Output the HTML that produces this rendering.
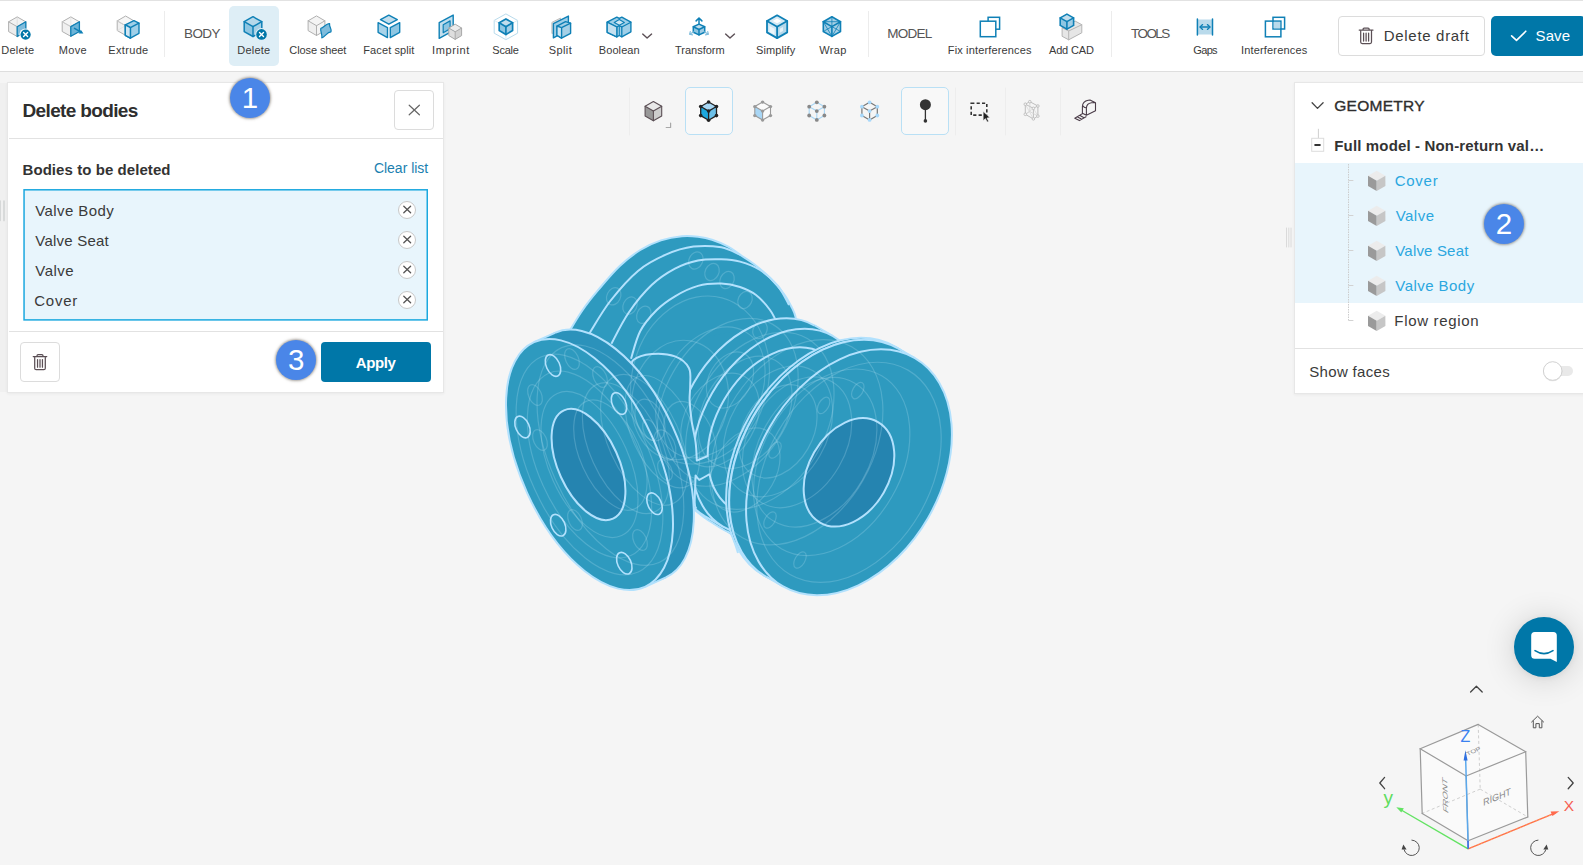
<!DOCTYPE html>
<html lang="en">
<head>
<meta charset="utf-8">
<title>CAD mode - Delete bodies</title>
<style>
*{box-sizing:border-box}
html,body{margin:0;padding:0}
body{width:1583px;height:865px;overflow:hidden;position:relative;background:#f5f5f5;font-family:"Liberation Sans",sans-serif}
.abs,.t,svg.i{position:absolute}
.t{white-space:nowrap;font-weight:400}
#topbar{left:0;top:0;width:1583px;height:72px;background:#fff;border-top:1px solid #e2e2e2;border-bottom:1px solid #dedede}
.sep{width:1px;top:11px;height:46px;background:#ececec}
#hl{left:229px;top:6px;width:50px;height:60px;background:#deeef6;border-radius:5px}
.btn{background:#fff;border:1px solid #dcdcdc;border-radius:4px}
.pbtn{background:#0077a8;border-radius:4px}
.panel{background:#fff;border:1px solid #e7e7e7;box-shadow:0 1px 3px rgba(0,0,0,.05)}
.hr{height:1px;background:#e2e2e2}
.badge{width:40px;height:40px;border-radius:50%;background:#4a86e8;box-shadow:0 0 2.5px 1px rgba(95,85,75,.55);color:#fff;font-size:29.5px;line-height:40px;text-align:center}
.xc{width:18px;height:18px;border-radius:50%;background:#fff;border:1px solid #c8c8c8}
.act{width:48px;height:48px;top:87px;border:1px solid #b9e0f5;border-radius:5px;background:#f8f8f8}
</style>
</head>
<body>
<div id="topbar" class="abs"></div>
<div class="abs" style="left:0;top:83px;width:7px;height:309px;background:#f0f0f0"></div>
<div id="hl" class="abs"></div>
<div class="abs sep" style="left:164px"></div>
<div class="abs sep" style="left:868px"></div>
<div class="abs sep" style="left:1111px"></div>
<div class="abs btn" style="left:1338px;top:16px;width:147px;height:40px"></div>
<div class="abs pbtn" style="left:1491px;top:16px;width:95px;height:40px;border-radius:5px"></div>

<!-- left panel -->
<div class="abs panel" style="left:7px;top:82px;width:437px;height:311px"></div>
<div class="abs hr" style="left:9px;top:138px;width:434px"></div>
<div class="abs btn" style="left:394px;top:90px;width:40px;height:40px"></div>
<div class="abs" style="left:24px;top:190px;width:403px;height:130px;background:#e8f5fc"></div>
<svg class="i" style="left:0;top:0" width="460" height="400"><rect x="24.05" y="189.8" width="403.2" height="130.1" fill="none" stroke="#1ba8df" stroke-width="1.5"/></svg>
<div class="abs xc" style="left:398px;top:200.5px"></div>
<div class="abs xc" style="left:398px;top:230.5px"></div>
<div class="abs xc" style="left:398px;top:260.5px"></div>
<div class="abs xc" style="left:398px;top:290.5px"></div>
<div class="abs hr" style="left:9px;top:331px;width:434px"></div>
<div class="abs btn" style="left:20px;top:342px;width:40px;height:40px"></div>
<div class="abs pbtn" style="left:321px;top:342px;width:110px;height:40px"></div>

<!-- right panel -->
<div class="abs panel" style="left:1294px;top:82px;width:300px;height:312px"></div>
<div class="abs" style="left:1295px;top:163px;width:288px;height:140px;background:#e8f5fc"></div>
<div class="abs hr" style="left:1295px;top:348px;width:288px"></div>

<!-- view toolbar active boxes -->
<div class="abs act" style="left:685px"></div>
<div class="abs act" style="left:901px"></div>

<svg class="i" style="left:0;top:0" width="1583" height="865" viewBox="0 0 1583 865">
<path d="M569.8 330.5C571.9 327.1 577.7 317.1 582.5 310.2C587.3 303.3 592.5 296.7 598.7 289.4C604.9 282.1 612.6 272.9 619.5 266.3C626.4 259.7 633.4 254.3 640.3 250.0C647.2 245.7 654.0 242.7 661.0 240.4C668.0 238.1 675.8 236.8 682.0 236.2C688.2 235.6 693.0 236.1 698.0 236.7C703.0 237.3 707.0 238.0 712.0 239.7C717.0 241.3 723.5 244.1 728.2 246.6C732.9 249.1 735.7 251.8 740.0 254.7C744.3 257.6 748.9 260.1 753.9 264.0C758.9 267.9 765.0 272.8 770.0 277.8C775.0 282.8 780.3 289.0 784.0 294.0C787.7 299.0 790.1 304.1 792.0 307.9C793.9 311.7 794.7 313.0 795.5 316.7C796.3 320.4 796.8 327.8 797.0 330.0L790 420L740 500L690 505L620 470L575 400Z" fill="#2e9abf" stroke="#b2e1fd" stroke-width="2" stroke-linejoin="round"/>
<path d="M589.4 333.3C592.9 327.9 602.2 311.4 610.3 301.0C618.4 290.6 628.8 278.6 638.0 270.9C647.2 263.2 656.5 258.8 665.8 254.7C675.0 250.6 684.2 247.8 693.5 246.6C702.8 245.4 713.5 246.0 721.3 247.3C729.0 248.7 736.9 253.5 740.0 254.7" fill="none" stroke="#b2e1fd" stroke-width="2" stroke-linejoin="round"/>
<path d="M611.4 343.7C614.3 338.5 622.0 322.3 628.8 312.5C635.5 302.7 644.2 292.1 651.9 284.8C659.6 277.5 667.3 272.7 675.0 268.6C682.7 264.6 690.3 262.1 698.0 260.5C705.7 258.9 714.3 259.1 721.3 259.3C728.3 259.5 733.5 259.8 740.0 261.6C746.5 263.4 753.7 265.9 760.0 270.0C766.3 274.1 773.2 280.2 778.0 286.0C782.8 291.8 787.2 301.8 789.0 305.0" fill="none" stroke="#b2e1fd" stroke-width="2" stroke-linejoin="round"/>
<path d="M631.0 358.8C632.5 354.2 636.0 339.1 640.3 331.0C644.5 322.9 650.7 316.0 656.5 310.2C662.3 304.4 668.1 300.4 675.0 296.3C681.9 292.2 690.3 288.0 698.0 285.9C705.7 283.8 714.3 283.4 721.3 283.6C728.3 283.8 734.2 285.1 740.0 287.0C745.8 288.9 751.0 291.2 756.0 295.0C761.0 298.8 766.3 305.0 770.0 310.0C773.7 315.0 776.7 322.5 778.0 325.0" fill="none" stroke="#b2e1fd" stroke-width="2" stroke-linejoin="round"/>
<path d="M640 350L740 330L745 520L731.6 535L706 518.7L694 509.3L690 500Z" fill="#2e9abf" stroke="none" stroke-width="2" stroke-linejoin="round"/>
<path d="M694.0 509.3C696.0 510.9 701.0 515.2 706.0 518.7C711.0 522.2 719.7 527.3 724.0 530.0C728.3 532.7 729.3 531.2 731.6 535.0C733.9 538.8 736.9 550.0 738.0 553.0" fill="none" stroke="#b2e1fd" stroke-width="2" stroke-linejoin="round"/>
<ellipse cx="759.8" cy="420.8" rx="76.2" ry="110.0" transform="rotate(30 759.8 420.8)" fill="#2e9abf" stroke="#b2e1fd" stroke-width="2"/>
<path d="M814.8 325.5L833.0 336.0L723.0 526.6L704.8 516.1Z" fill="#2e9abf" stroke="none" stroke-width="2" stroke-linejoin="round"/>
<path d="M814.8 325.5L833.0 336.0M723.0 526.6L704.8 516.1" fill="none" stroke="#b2e1fd" stroke-width="2" stroke-linejoin="round"/>
<ellipse cx="778.0" cy="431.3" rx="76.2" ry="110.0" transform="rotate(30 778.0 431.3)" fill="#2e9abf" stroke="#b2e1fd" stroke-width="2"/>
<ellipse cx="778.0" cy="431.3" rx="62.4" ry="90.0" transform="rotate(30 778.0 431.3)" fill="#2e9abf" stroke="#b2e1fd" stroke-width="2"/>
<path d="M823.0 353.4L872.4 381.9L782.4 537.7L733.0 509.2Z" fill="#2e9abf" stroke="none" stroke-width="2" stroke-linejoin="round"/>
<path d="M823.0 353.4L872.4 381.9M782.4 537.7L733.0 509.2" fill="none" stroke="#b2e1fd" stroke-width="2" stroke-linejoin="round"/>
<ellipse cx="827.4" cy="459.8" rx="62.4" ry="90.0" transform="rotate(30 827.4 459.8)" fill="#2e9abf" stroke="#b2e1fd" stroke-width="2"/>
<ellipse cx="829.1" cy="460.8" rx="91.3" ry="131.8" transform="rotate(30 829.1 460.8)" fill="#2e9abf" stroke="#b2e1fd" stroke-width="2"/>
<path d="M895.0 346.7L898.0 348.4L766.2 576.7L763.2 574.9Z" fill="#2e9abf" stroke="none" stroke-width="2" stroke-linejoin="round"/>
<path d="M895.0 346.7L898.0 348.4M766.2 576.7L763.2 574.9" fill="none" stroke="#b2e1fd" stroke-width="2" stroke-linejoin="round"/>
<ellipse cx="832.1" cy="462.6" rx="91.3" ry="131.8" transform="rotate(30 832.1 462.6)" fill="#2e9abf" stroke="#b2e1fd" stroke-width="2"/>
<ellipse cx="832.1" cy="462.6" rx="91.3" ry="131.8" transform="rotate(30 832.1 462.6)" fill="#2e9abf" stroke="#b2e1fd" stroke-width="2"/>
<path d="M898.0 348.4L914.9 358.2L783.1 586.4L766.2 576.7Z" fill="#2e9abf" stroke="none" stroke-width="2" stroke-linejoin="round"/>
<path d="M898.0 348.4L914.9 358.2M783.1 586.4L766.2 576.7" fill="none" stroke="#b2e1fd" stroke-width="2" stroke-linejoin="round"/>
<ellipse cx="849.0" cy="472.3" rx="91.3" ry="131.8" transform="rotate(30 849.0 472.3)" fill="#2e9abf" stroke="#b2e1fd" stroke-width="2"/>
<ellipse cx="849.0" cy="472.3" rx="40.2" ry="58.0" transform="rotate(30 849.0 472.3)" fill="#2584b0" stroke="#b2e1fd" stroke-width="2"/>
<path d="M690.2 385.3L689.6 400.3L691.7 421.4L695.6 442.4L696.8 460.5L708.3 455.9L709.8 474L699.2 480L695.6 475.5L694.7 502.6L694 509.3L670 530L640 450L631 372L633.4 360L651.9 354L675 356.4L688.9 368Z" fill="#2e9abf" stroke="none" stroke-width="2" stroke-linejoin="round"/>
<path d="M631.0 372.0C631.4 370.0 629.9 363.0 633.4 360.0C636.9 357.0 645.0 354.6 651.9 354.0C658.8 353.4 668.8 354.1 675.0 356.4C681.2 358.7 686.4 363.2 688.9 368.0C691.4 372.8 690.1 379.9 690.2 385.3C690.3 390.7 689.4 394.3 689.6 400.3C689.9 406.3 690.7 414.4 691.7 421.4C692.7 428.4 694.8 435.9 695.6 442.4C696.5 448.9 696.6 457.5 696.8 460.5L708.3 455.9" fill="none" stroke="#b2e1fd" stroke-width="2" stroke-linejoin="round"/>
<path d="M709.8 474L699.2 480L695.6 475.5C695.5 480.0 694.6 497.1 694.7 502.6C694.8 508.1 696.0 507.6 696.2 508.6" fill="none" stroke="#b2e1fd" stroke-width="2" stroke-linejoin="round"/>
<ellipse cx="610.4" cy="455.1" rx="68.5" ry="134.3" transform="rotate(-24.4 610.4 455.1)" fill="#2b92bb" stroke="#b2e1fd" stroke-width="2"/>
<path d="M555.0 332.8L534.0 342.2L645.0 586.8L665.9 577.4Z" fill="#2b92bb" stroke="none" stroke-width="2" stroke-linejoin="round"/>
<path d="M555.0 332.8L534.0 342.2M645.0 586.8L665.9 577.4" fill="none" stroke="#b2e1fd" stroke-width="2" stroke-linejoin="round"/>
<ellipse cx="589.5" cy="464.5" rx="68.5" ry="134.3" transform="rotate(-24.4 589.5 464.5)" fill="#2e9abf" stroke="#b2e1fd" stroke-width="2"/>
<ellipse cx="588.5" cy="464.5" rx="30.3" ry="59.4" transform="rotate(-24.4 588.5 464.5)" fill="#2584b0" stroke="#b2e1fd" stroke-width="2"/>
<ellipse cx="553.0" cy="365.5" rx="6.7" ry="11.5" transform="rotate(-24.4 553.0 365.5)" fill="none" stroke="#b2e1fd" stroke-width="1.6"/>
<ellipse cx="619.0" cy="403.5" rx="6.7" ry="11.5" transform="rotate(-24.4 619.0 403.5)" fill="none" stroke="#b2e1fd" stroke-width="1.6"/>
<ellipse cx="522.5" cy="427.0" rx="6.7" ry="11.5" transform="rotate(-24.4 522.5 427.0)" fill="none" stroke="#b2e1fd" stroke-width="1.6"/>
<ellipse cx="654.5" cy="503.7" rx="6.7" ry="11.5" transform="rotate(-24.4 654.5 503.7)" fill="none" stroke="#b2e1fd" stroke-width="1.6"/>
<ellipse cx="558.2" cy="525.2" rx="6.7" ry="11.5" transform="rotate(-24.4 558.2 525.2)" fill="none" stroke="#b2e1fd" stroke-width="1.6"/>
<ellipse cx="624.3" cy="563.2" rx="6.7" ry="11.5" transform="rotate(-24.4 624.3 563.2)" fill="none" stroke="#b2e1fd" stroke-width="1.6"/>
<ellipse cx="695.8" cy="260.5" rx="6.8" ry="9.0" transform="rotate(25 695.8 260.5)" fill="none" stroke="rgba(200,235,252,0.22)" stroke-width="1.2"/>
<ellipse cx="712.0" cy="272.0" rx="6.8" ry="9.0" transform="rotate(25 712.0 272.0)" fill="none" stroke="rgba(200,235,252,0.22)" stroke-width="1.2"/>
<ellipse cx="727.0" cy="280.0" rx="6.8" ry="9.0" transform="rotate(25 727.0 280.0)" fill="none" stroke="rgba(200,235,252,0.22)" stroke-width="1.2"/>
<ellipse cx="613.7" cy="296.3" rx="6.8" ry="9.0" transform="rotate(25 613.7 296.3)" fill="none" stroke="rgba(200,235,252,0.22)" stroke-width="1.2"/>
<ellipse cx="630.0" cy="305.6" rx="6.8" ry="9.0" transform="rotate(25 630.0 305.6)" fill="none" stroke="rgba(200,235,252,0.22)" stroke-width="1.2"/>
<ellipse cx="643.8" cy="314.8" rx="6.8" ry="9.0" transform="rotate(25 643.8 314.8)" fill="none" stroke="rgba(200,235,252,0.22)" stroke-width="1.2"/>
<ellipse cx="745.0" cy="300.0" rx="6.8" ry="9.0" transform="rotate(25 745.0 300.0)" fill="none" stroke="rgba(200,235,252,0.22)" stroke-width="1.2"/>
<ellipse cx="760.0" cy="330.0" rx="6.8" ry="9.0" transform="rotate(25 760.0 330.0)" fill="none" stroke="rgba(200,235,252,0.22)" stroke-width="1.2"/>
<ellipse cx="849.0" cy="472.3" rx="81.8" ry="118.0" transform="rotate(30 849.0 472.3)" fill="none" stroke="rgba(200,235,252,0.22)" stroke-width="1.2"/>
<ellipse cx="831.7" cy="462.3" rx="69.3" ry="100.0" transform="rotate(30 831.7 462.3)" fill="none" stroke="rgba(200,235,252,0.22)" stroke-width="1.2"/>
<ellipse cx="814.4" cy="452.3" rx="55.4" ry="80.0" transform="rotate(30 814.4 452.3)" fill="none" stroke="rgba(200,235,252,0.22)" stroke-width="1.2"/>
<ellipse cx="797.0" cy="442.3" rx="48.5" ry="70.0" transform="rotate(30 797.0 442.3)" fill="none" stroke="rgba(200,235,252,0.22)" stroke-width="1.2"/>
<ellipse cx="778.0" cy="431.3" rx="48.5" ry="70.0" transform="rotate(30 778.0 431.3)" fill="none" stroke="rgba(200,235,252,0.22)" stroke-width="1.2"/>
<ellipse cx="778.0" cy="431.3" rx="34.6" ry="50.0" transform="rotate(30 778.0 431.3)" fill="none" stroke="rgba(200,235,252,0.22)" stroke-width="1.2"/>
<ellipse cx="759.8" cy="420.8" rx="65.8" ry="95.0" transform="rotate(30 759.8 420.8)" fill="none" stroke="rgba(200,235,252,0.22)" stroke-width="1.2"/>
<ellipse cx="797.0" cy="442.3" rx="76.2" ry="110.0" transform="rotate(30 797.0 442.3)" fill="none" stroke="rgba(200,235,252,0.22)" stroke-width="1.2"/>
<ellipse cx="745.1" cy="412.3" rx="41.6" ry="60.0" transform="rotate(30 745.1 412.3)" fill="none" stroke="rgba(200,235,252,0.22)" stroke-width="1.2"/>
<ellipse cx="727.8" cy="402.3" rx="62.4" ry="90.0" transform="rotate(30 727.8 402.3)" fill="none" stroke="rgba(200,235,252,0.22)" stroke-width="1.2"/>
<ellipse cx="710.4" cy="392.3" rx="48.5" ry="70.0" transform="rotate(30 710.4 392.3)" fill="none" stroke="rgba(200,235,252,0.22)" stroke-width="1.2"/>
<ellipse cx="857.8" cy="390.6" rx="5.0" ry="9.0" transform="rotate(30 857.8 390.6)" fill="none" stroke="rgba(200,235,252,0.22)" stroke-width="1.2"/>
<ellipse cx="823.6" cy="405.4" rx="5.0" ry="9.0" transform="rotate(30 823.6 405.4)" fill="none" stroke="rgba(200,235,252,0.22)" stroke-width="1.2"/>
<ellipse cx="775.0" cy="450.0" rx="5.0" ry="9.0" transform="rotate(30 775.0 450.0)" fill="none" stroke="rgba(200,235,252,0.22)" stroke-width="1.2"/>
<ellipse cx="770.0" cy="520.0" rx="5.0" ry="9.0" transform="rotate(30 770.0 520.0)" fill="none" stroke="rgba(200,235,252,0.22)" stroke-width="1.2"/>
<ellipse cx="800.0" cy="560.0" rx="5.0" ry="9.0" transform="rotate(30 800.0 560.0)" fill="none" stroke="rgba(200,235,252,0.22)" stroke-width="1.2"/>
<ellipse cx="589.5" cy="464.5" rx="60.2" ry="118.0" transform="rotate(-24.4 589.5 464.5)" fill="none" stroke="rgba(200,235,252,0.22)" stroke-width="1.2"/>
<ellipse cx="589.5" cy="464.5" rx="51.0" ry="100.0" transform="rotate(-24.4 589.5 464.5)" fill="none" stroke="rgba(200,235,252,0.22)" stroke-width="1.2"/>
<ellipse cx="589.5" cy="464.5" rx="39.8" ry="78.0" transform="rotate(-24.4 589.5 464.5)" fill="none" stroke="rgba(200,235,252,0.22)" stroke-width="1.2"/>
<ellipse cx="610.4" cy="455.1" rx="60.2" ry="118.0" transform="rotate(-24.4 610.4 455.1)" fill="none" stroke="rgba(200,235,252,0.22)" stroke-width="1.2"/>
<ellipse cx="625.9" cy="448.1" rx="35.7" ry="70.0" transform="rotate(-24.4 625.9 448.1)" fill="none" stroke="rgba(200,235,252,0.22)" stroke-width="1.2"/>
<ellipse cx="644.1" cy="439.9" rx="35.7" ry="70.0" transform="rotate(-24.4 644.1 439.9)" fill="none" stroke="rgba(200,235,252,0.22)" stroke-width="1.2"/>
<ellipse cx="662.3" cy="431.7" rx="30.6" ry="60.0" transform="rotate(-24.4 662.3 431.7)" fill="none" stroke="rgba(200,235,252,0.22)" stroke-width="1.2"/>
<ellipse cx="610.4" cy="455.1" rx="30.1" ry="59.0" transform="rotate(-24.4 610.4 455.1)" fill="none" stroke="rgba(200,235,252,0.22)" stroke-width="1.2"/>
<ellipse cx="572.0" cy="359.0" rx="6.4" ry="11.0" transform="rotate(-24.4 572.0 359.0)" fill="none" stroke="rgba(200,235,252,0.22)" stroke-width="1.2"/>
<ellipse cx="600.0" cy="377.0" rx="6.4" ry="11.0" transform="rotate(-24.4 600.0 377.0)" fill="none" stroke="rgba(200,235,252,0.22)" stroke-width="1.2"/>
<ellipse cx="535.0" cy="395.0" rx="6.4" ry="11.0" transform="rotate(-24.4 535.0 395.0)" fill="none" stroke="rgba(200,235,252,0.22)" stroke-width="1.2"/>
<ellipse cx="540.0" cy="440.0" rx="6.4" ry="11.0" transform="rotate(-24.4 540.0 440.0)" fill="none" stroke="rgba(200,235,252,0.22)" stroke-width="1.2"/>
<ellipse cx="575.0" cy="520.0" rx="6.4" ry="11.0" transform="rotate(-24.4 575.0 520.0)" fill="none" stroke="rgba(200,235,252,0.22)" stroke-width="1.2"/>
<ellipse cx="640.0" cy="540.0" rx="6.4" ry="11.0" transform="rotate(-24.4 640.0 540.0)" fill="none" stroke="rgba(200,235,252,0.22)" stroke-width="1.2"/>
<ellipse cx="665.0" cy="470.0" rx="6.4" ry="11.0" transform="rotate(-24.4 665.0 470.0)" fill="none" stroke="rgba(200,235,252,0.22)" stroke-width="1.2"/>
<ellipse cx="650.0" cy="430.0" rx="6.4" ry="11.0" transform="rotate(-24.4 650.0 430.0)" fill="none" stroke="rgba(200,235,252,0.22)" stroke-width="1.2"/>
<ellipse cx="680.0" cy="400.0" rx="48.0" ry="60.0" transform="rotate(10 680.0 400.0)" fill="none" stroke="rgba(200,235,252,0.22)" stroke-width="1.2"/>
<ellipse cx="700.0" cy="380.0" rx="68.0" ry="85.0" transform="rotate(15 700.0 380.0)" fill="none" stroke="rgba(200,235,252,0.22)" stroke-width="1.2"/>
<ellipse cx="720.0" cy="420.0" rx="35.0" ry="50.0" transform="rotate(30 720.0 420.0)" fill="none" stroke="rgba(200,235,252,0.22)" stroke-width="1.2"/>
<ellipse cx="690.0" cy="440.0" rx="24.0" ry="40.0" transform="rotate(-20 690.0 440.0)" fill="none" stroke="rgba(200,235,252,0.22)" stroke-width="1.2"/>
<ellipse cx="730.0" cy="380.0" rx="21.0" ry="30.0" transform="rotate(30 730.0 380.0)" fill="none" stroke="rgba(200,235,252,0.22)" stroke-width="1.2"/>
<ellipse cx="650.0" cy="420.0" rx="13.2" ry="22.0" transform="rotate(-24 650.0 420.0)" fill="none" stroke="rgba(200,235,252,0.22)" stroke-width="1.2"/>
<ellipse cx="665.0" cy="445.0" rx="9.6" ry="16.0" transform="rotate(-24 665.0 445.0)" fill="none" stroke="rgba(200,235,252,0.22)" stroke-width="1.2"/>
<ellipse cx="745.0" cy="470.0" rx="31.0" ry="45.0" transform="rotate(30 745.0 470.0)" fill="none" stroke="rgba(200,235,252,0.22)" stroke-width="1.2"/>
</svg>
<div class="abs" style="left:1514px;top:616.9px;width:60px;height:60px;border-radius:50%;background:#0077a8;box-shadow:0 1px 6px rgba(0,0,0,.06),0 2px 32px rgba(0,0,0,.16)"></div>
<svg class="i" style="left:0;top:0" width="1583" height="865" viewBox="0 0 1583 865">
<polygon points="17.2,16.9 25.8,21.8 17.2,26.7 8.6,21.8" fill="#f2f2f2" stroke="none" stroke-width="1" stroke-linejoin="round"/>
<polygon points="8.6,21.8 17.2,26.7 17.2,36.5 8.6,31.6" fill="#ececec" stroke="none" stroke-width="1" stroke-linejoin="round"/>
<polygon points="17.2,26.7 25.8,21.8 25.8,31.6 17.2,36.5" fill="#7fbcdc" stroke="none" stroke-width="1" stroke-linejoin="round"/>
<polygon points="17.2,16.9 25.8,21.8 25.8,31.6 17.2,36.5 8.6,31.6 8.6,21.8" fill="none" stroke="#b0b0b0" stroke-width="1" stroke-linejoin="round"/>
<polyline points="8.6,21.8 17.2,26.7 25.8,21.8" fill="none" stroke="#b0b0b0" stroke-width="1" stroke-linecap="round" stroke-linejoin="round"/>
<polyline points="17.2,26.7 17.2,36.5" fill="none" stroke="#b0b0b0" stroke-width="1" stroke-linecap="round" stroke-linejoin="round"/>
<polyline points="17.2,16.9 17.2,26.7" fill="none" stroke="#d5d5d5" stroke-width="0.6" stroke-linecap="round" stroke-linejoin="round"/>
<polygon points="17.2,26.7 25.8,21.8 25.8,31.6 17.2,36.5" fill="#7fbcdc" stroke="#0f80b6" stroke-width="1.3" stroke-linejoin="round"/>
<circle cx="25.6" cy="34.6" r="6.2" fill="#fff" stroke="none" stroke-width="1"/>
<circle cx="25.6" cy="34.6" r="5.1" fill="#0077a8" stroke="none" stroke-width="1"/>
<polyline points="23.6,32.6 27.6,36.6" fill="none" stroke="#fff" stroke-width="1.4" stroke-linecap="round" stroke-linejoin="round"/>
<polyline points="27.6,32.6 23.6,36.6" fill="none" stroke="#fff" stroke-width="1.4" stroke-linecap="round" stroke-linejoin="round"/>
<polygon points="70.8,16.9 79.4,21.8 70.8,26.6 62.2,21.8" fill="#f6f6f6" stroke="none" stroke-width="1" stroke-linejoin="round"/>
<polygon points="62.2,21.8 70.8,26.6 70.8,36.3 62.2,31.5" fill="#f0f0f0" stroke="none" stroke-width="1" stroke-linejoin="round"/>
<polygon points="70.8,26.6 79.4,21.8 79.4,31.5 70.8,36.3" fill="#6db4d8" stroke="none" stroke-width="1" stroke-linejoin="round"/>
<polygon points="70.8,16.9 79.4,21.8 79.4,31.5 70.8,36.3 62.2,31.5 62.2,21.8" fill="none" stroke="#b0b0b0" stroke-width="1" stroke-linejoin="round"/>
<polyline points="62.2,21.8 70.8,26.6 79.4,21.8" fill="none" stroke="#b0b0b0" stroke-width="1" stroke-linecap="round" stroke-linejoin="round"/>
<polyline points="70.8,26.6 70.8,36.3" fill="none" stroke="#b0b0b0" stroke-width="1" stroke-linecap="round" stroke-linejoin="round"/>
<polyline points="62.2,21.8 79.4,31.5" fill="none" stroke="#dcdcdc" stroke-width="0.6" stroke-linecap="round" stroke-linejoin="round"/>
<polyline points="70.8,16.9 70.8,26.6" fill="none" stroke="#dcdcdc" stroke-width="0.6" stroke-linecap="round" stroke-linejoin="round"/>
<polygon points="70.8,26.6 79.4,21.8 79.4,31.5 70.8,36.3" fill="#6db4d8" stroke="#0f80b6" stroke-width="1.3" stroke-linejoin="round"/>
<polyline points="74.5,28.3 81.0,32.2" fill="none" stroke="#0f80b6" stroke-width="1.5" stroke-linecap="round" stroke-linejoin="round"/>
<polygon points="83.4,33.6 78.6,33.4 80.8,29.8" fill="#0f80b6" stroke="none" stroke-width="1" stroke-linejoin="round"/>
<polygon points="125.6,16.0 134.0,20.9 125.6,25.7 117.2,20.9" fill="#f6f6f6" stroke="none" stroke-width="1" stroke-linejoin="round"/>
<polygon points="117.2,20.9 125.6,25.7 125.6,35.4 117.2,30.5" fill="#f0f0f0" stroke="none" stroke-width="1" stroke-linejoin="round"/>
<polygon points="125.6,25.7 134.0,20.9 134.0,30.5 125.6,35.4" fill="#f0f0f0" stroke="none" stroke-width="1" stroke-linejoin="round"/>
<polygon points="125.6,16.0 134.0,20.9 134.0,30.5 125.6,35.4 117.2,30.5 117.2,20.9" fill="none" stroke="#b0b0b0" stroke-width="1" stroke-linejoin="round"/>
<polyline points="117.2,20.9 125.6,25.7 134.0,20.9" fill="none" stroke="#b0b0b0" stroke-width="1" stroke-linecap="round" stroke-linejoin="round"/>
<polyline points="125.6,25.7 125.6,35.4" fill="none" stroke="#b0b0b0" stroke-width="1" stroke-linecap="round" stroke-linejoin="round"/>
<polyline points="117.2,20.9 134.0,30.5" fill="none" stroke="#dcdcdc" stroke-width="0.6" stroke-linecap="round" stroke-linejoin="round"/>
<polyline points="117.2,30.5 134.0,20.9" fill="none" stroke="#dcdcdc" stroke-width="0.6" stroke-linecap="round" stroke-linejoin="round"/>
<polygon points="125.3,24.8 133.9,20.6 139.0,23.2 139.0,33.3 130.4,38.1 125.3,35.3" fill="#9fcfe8" stroke="#0f80b6" stroke-width="1.4" stroke-linejoin="round"/>
<polyline points="125.3,24.8 130.4,27.7 139.0,23.2" fill="none" stroke="#0f80b6" stroke-width="1.4" stroke-linecap="round" stroke-linejoin="round"/>
<polyline points="130.4,27.7 130.4,38.1" fill="none" stroke="#0f80b6" stroke-width="1.4" stroke-linecap="round" stroke-linejoin="round"/>
<polygon points="125.3,24.8 130.4,27.7 130.4,38.1 125.3,35.3" fill="#cfe6f3" stroke="#0f80b6" stroke-width="1.4" stroke-linejoin="round"/>
<polygon points="253.0,16.7 261.8,21.7 253.0,26.6 244.2,21.7" fill="#b5d8ea" stroke="none" stroke-width="1" stroke-linejoin="round"/>
<polygon points="244.2,21.7 253.0,26.6 253.0,36.5 244.2,31.6" fill="#8ec6e2" stroke="none" stroke-width="1" stroke-linejoin="round"/>
<polygon points="253.0,26.6 261.8,21.7 261.8,31.6 253.0,36.5" fill="#a6d0e6" stroke="none" stroke-width="1" stroke-linejoin="round"/>
<polygon points="253.0,16.7 261.8,21.7 261.8,31.6 253.0,36.5 244.2,31.6 244.2,21.7" fill="none" stroke="#0f80b6" stroke-width="1.5" stroke-linejoin="round"/>
<polyline points="244.2,21.7 253.0,26.6 261.8,21.7" fill="none" stroke="#0f80b6" stroke-width="1.5" stroke-linecap="round" stroke-linejoin="round"/>
<polyline points="253.0,26.6 253.0,36.5" fill="none" stroke="#0f80b6" stroke-width="1.5" stroke-linecap="round" stroke-linejoin="round"/>
<circle cx="261.5" cy="34.4" r="6.3" fill="#deeef6" stroke="none" stroke-width="1"/>
<circle cx="261.5" cy="34.4" r="5.3" fill="#0077a8" stroke="none" stroke-width="1"/>
<polyline points="259.5,32.4 263.5,36.4" fill="none" stroke="#fff" stroke-width="1.4" stroke-linecap="round" stroke-linejoin="round"/>
<polyline points="263.5,32.4 259.5,36.4" fill="none" stroke="#fff" stroke-width="1.4" stroke-linecap="round" stroke-linejoin="round"/>
<polygon points="316.5,15.9 324.9,20.8 316.5,25.7 308.1,20.8" fill="#f4f4f4" stroke="none" stroke-width="1" stroke-linejoin="round"/>
<polygon points="308.1,20.8 316.5,25.7 316.5,35.5 308.1,30.6" fill="#efefef" stroke="none" stroke-width="1" stroke-linejoin="round"/>
<polygon points="316.5,25.7 324.9,20.8 324.9,30.6 316.5,35.5" fill="#f4f4f4" stroke="none" stroke-width="1" stroke-linejoin="round"/>
<polygon points="316.5,15.9 324.9,20.8 324.9,30.6 316.5,35.5 308.1,30.6 308.1,20.8" fill="none" stroke="#b0b0b0" stroke-width="1" stroke-linejoin="round"/>
<polyline points="308.1,20.8 316.5,25.7 324.9,20.8" fill="none" stroke="#b0b0b0" stroke-width="1" stroke-linecap="round" stroke-linejoin="round"/>
<polyline points="316.5,25.7 316.5,35.5" fill="none" stroke="#b0b0b0" stroke-width="1" stroke-linecap="round" stroke-linejoin="round"/>
<path d="M320.8 28.4C324 28 326 23 329.6 23.6C329 27 332 29 331 31.9C327 32 325 37 321.8 37.8C322.5 34 320 31 320.8 28.4Z" fill="#7fbcdc" stroke="#0f80b6" stroke-width="1.2" stroke-linejoin="round"/>
<polygon points="388.8,15.1 397.3,19.6 388.8,24.2 380.5,19.6" fill="#c2deed" stroke="#0f80b6" stroke-width="1.4" stroke-linejoin="round"/>
<polygon points="378.1,22.7 387.5,27.7 387.5,37.6 378.1,32.3" fill="#a8d3e9" stroke="#0f80b6" stroke-width="1.4" stroke-linejoin="round"/>
<polygon points="390.3,27.7 399.7,22.7 399.7,32.3 390.3,37.6" fill="#8ec6e2" stroke="#0f80b6" stroke-width="1.4" stroke-linejoin="round"/>
<polygon points="439.2,22.7 453.2,15.1 453.2,30.7 439.2,38.3" fill="#c2deed" stroke="#0f80b6" stroke-width="1.4" stroke-linejoin="round"/>
<polygon points="443.2,24.7 450.1,20.9 450.1,28.7 443.2,32.8" fill="#8ec6e2" stroke="#0f80b6" stroke-width="1.2" stroke-linejoin="round"/>
<polygon points="455.2,24.2 461.6,28.0 455.2,31.8 448.8,28.0" fill="#ececec" stroke="none" stroke-width="1" stroke-linejoin="round"/>
<polygon points="448.8,28.0 455.2,31.8 455.2,39.4 448.8,35.6" fill="#dedede" stroke="none" stroke-width="1" stroke-linejoin="round"/>
<polygon points="455.2,31.8 461.6,28.0 461.6,35.6 455.2,39.4" fill="#d2d2d2" stroke="none" stroke-width="1" stroke-linejoin="round"/>
<polygon points="455.2,24.2 461.6,28.0 461.6,35.6 455.2,39.4 448.8,35.6 448.8,28.0" fill="none" stroke="#a8a8a8" stroke-width="1" stroke-linejoin="round"/>
<polyline points="448.8,28.0 455.2,31.8 461.6,28.0" fill="none" stroke="#a8a8a8" stroke-width="1" stroke-linecap="round" stroke-linejoin="round"/>
<polyline points="455.2,31.8 455.2,39.4" fill="none" stroke="#a8a8a8" stroke-width="1" stroke-linecap="round" stroke-linejoin="round"/>
<polygon points="505.9,13.9 517.6,20.4 517.6,33.2 505.9,39.7 494.2,33.2 494.2,20.4" fill="#fff" stroke="#b9dbec" stroke-width="1" stroke-linejoin="round"/>
<polyline points="494.2,20.4 505.9,26.8 517.6,20.4" fill="none" stroke="#d3e8f3" stroke-width="0.8" stroke-linecap="round" stroke-linejoin="round"/>
<polyline points="505.9,26.8 505.9,39.7" fill="none" stroke="#d3e8f3" stroke-width="0.8" stroke-linecap="round" stroke-linejoin="round"/>
<polygon points="505.9,18.9 512.6,22.8 505.9,26.7 499.2,22.8" fill="#c2deed" stroke="none" stroke-width="1" stroke-linejoin="round"/>
<polygon points="499.2,22.8 505.9,26.7 505.9,34.5 499.2,30.6" fill="#8ec6e2" stroke="none" stroke-width="1" stroke-linejoin="round"/>
<polygon points="505.9,26.7 512.6,22.8 512.6,30.6 505.9,34.5" fill="#9fcde6" stroke="none" stroke-width="1" stroke-linejoin="round"/>
<polygon points="505.9,18.9 512.6,22.8 512.6,30.6 505.9,34.5 499.2,30.6 499.2,22.8" fill="none" stroke="#0f80b6" stroke-width="1.7" stroke-linejoin="round"/>
<polyline points="499.2,22.8 505.9,26.7 512.6,22.8" fill="none" stroke="#0f80b6" stroke-width="1.7" stroke-linecap="round" stroke-linejoin="round"/>
<polyline points="505.9,26.7 505.9,34.5" fill="none" stroke="#0f80b6" stroke-width="1.7" stroke-linecap="round" stroke-linejoin="round"/>
<polygon points="551.9,22.4 560.5,18.1 560.5,29.0 551.9,33.5" fill="#e4e4e4" stroke="#bdbdbd" stroke-width="1" stroke-linejoin="round"/>
<polygon points="553.4,23.7 568.4,16.1 568.4,29.7 553.4,37.8" fill="#9fcfe8" stroke="#0f80b6" stroke-width="1.4" stroke-linejoin="round"/>
<polygon points="557.0,26.2 565.5,21.6 570.6,23.2 570.6,33.3 561.5,38.1 557.0,35.3" fill="#a6d0e6" stroke="#0f80b6" stroke-width="1.4" stroke-linejoin="round"/>
<polyline points="557.0,26.2 561.5,27.7 570.6,23.2" fill="none" stroke="#0f80b6" stroke-width="1.4" stroke-linecap="round" stroke-linejoin="round"/>
<polyline points="561.5,27.7 561.5,38.1" fill="none" stroke="#0f80b6" stroke-width="1.4" stroke-linecap="round" stroke-linejoin="round"/>
<polygon points="557.0,26.2 561.5,27.7 561.5,38.1 557.0,35.3" fill="#cfe6f3" stroke="#0f80b6" stroke-width="1.2" stroke-linejoin="round"/>
<polygon points="607.2,22.2 616.8,17.1 619.3,18.4 621.8,17.1 630.9,22.2 630.9,31.8 621.8,36.8 619.3,35.5 616.8,36.8 607.2,32.3" fill="#9fcfe8" stroke="#0f80b6" stroke-width="1.4" stroke-linejoin="round"/>
<polyline points="607.2,22.2 616.8,27.0 619.3,25.7 621.8,27.0 630.9,22.2" fill="none" stroke="#0f80b6" stroke-width="1.3" stroke-linecap="round" stroke-linejoin="round"/>
<polyline points="616.8,27.0 616.8,36.8" fill="none" stroke="#0f80b6" stroke-width="1.3" stroke-linecap="round" stroke-linejoin="round"/>
<polyline points="621.8,27.0 621.8,36.8" fill="none" stroke="#0f80b6" stroke-width="1.3" stroke-linecap="round" stroke-linejoin="round"/>
<polyline points="619.3,25.7 619.3,35.5" fill="none" stroke="#0f80b6" stroke-width="1" stroke-linecap="round" stroke-linejoin="round"/>
<polygon points="619.3,19.6 624.4,22.4 619.3,25.2 614.2,22.4" fill="#cfe6f3" stroke="#0f80b6" stroke-width="1.1" stroke-linejoin="round"/>
<polygon points="607.2,22.2 616.8,27.0 616.8,36.8 607.2,32.3" fill="#c4e0ef" stroke="#0f80b6" stroke-width="1.3" stroke-linejoin="round"/>
<polyline points="642.7,34.1 647.1,38.1 651.6,34.1" fill="none" stroke="#5b4f55" stroke-width="1.4" stroke-linecap="round" stroke-linejoin="round"/>
<polygon points="699.0,24.1 704.7,26.8 699.0,29.5 693.3,26.8" fill="#c2deed" stroke="none" stroke-width="1" stroke-linejoin="round"/>
<polygon points="693.3,26.8 699.0,29.5 699.0,34.9 693.3,32.2" fill="#8ec6e2" stroke="none" stroke-width="1" stroke-linejoin="round"/>
<polygon points="699.0,29.5 704.7,26.8 704.7,32.2 699.0,34.9" fill="#9fcde6" stroke="none" stroke-width="1" stroke-linejoin="round"/>
<polygon points="699.0,24.1 704.7,26.8 704.7,32.2 699.0,34.9 693.3,32.2 693.3,26.8" fill="none" stroke="#0f80b6" stroke-width="1.5" stroke-linejoin="round"/>
<polyline points="693.3,26.8 699.0,29.5 704.7,26.8" fill="none" stroke="#0f80b6" stroke-width="1.5" stroke-linecap="round" stroke-linejoin="round"/>
<polyline points="699.0,29.5 699.0,34.9" fill="none" stroke="#0f80b6" stroke-width="1.5" stroke-linecap="round" stroke-linejoin="round"/>
<polyline points="699.0,23.5 699.0,18.4" fill="none" stroke="#0f80b6" stroke-width="1.5" stroke-linecap="round" stroke-linejoin="round"/>
<polyline points="696.1,20.9 699.0,18.0 701.9,20.9" fill="none" stroke="#0f80b6" stroke-width="1.5" stroke-linecap="round" stroke-linejoin="round"/>
<polyline points="693.5,32.0 690.0,34.0" fill="none" stroke="#7fbcdc" stroke-width="1.2" stroke-linecap="round" stroke-linejoin="round"/>
<polyline points="690.3,31.5 689.6,34.3 692.5,34.9" fill="none" stroke="#7fbcdc" stroke-width="1.1" stroke-linecap="round" stroke-linejoin="round"/>
<polyline points="704.5,32.0 708.0,34.0" fill="none" stroke="#7fbcdc" stroke-width="1.2" stroke-linecap="round" stroke-linejoin="round"/>
<polyline points="707.7,31.5 708.4,34.3 705.5,34.9" fill="none" stroke="#7fbcdc" stroke-width="1.1" stroke-linecap="round" stroke-linejoin="round"/>
<polyline points="725.6,34.1 730.0,38.1 734.5,34.1" fill="none" stroke="#5b4f55" stroke-width="1.4" stroke-linecap="round" stroke-linejoin="round"/>
<polygon points="777.1,15.3 787.2,21.0 777.1,26.7 767.0,21.0" fill="#d4e9f4" stroke="none" stroke-width="1" stroke-linejoin="round"/>
<polygon points="767.0,21.0 777.1,26.7 777.1,38.1 767.0,32.4" fill="#cfe6f3" stroke="none" stroke-width="1" stroke-linejoin="round"/>
<polygon points="777.1,26.7 787.2,21.0 787.2,32.4 777.1,38.1" fill="#b5d8ea" stroke="none" stroke-width="1" stroke-linejoin="round"/>
<polygon points="777.1,15.3 787.2,21.0 787.2,32.4 777.1,38.1 767.0,32.4 767.0,21.0" fill="none" stroke="#0f80b6" stroke-width="1.8" stroke-linejoin="round"/>
<polyline points="767.0,21.0 777.1,26.7 787.2,21.0" fill="none" stroke="#0f80b6" stroke-width="1.8" stroke-linecap="round" stroke-linejoin="round"/>
<polyline points="777.1,26.7 777.1,38.1" fill="none" stroke="#0f80b6" stroke-width="1.8" stroke-linecap="round" stroke-linejoin="round"/>
<polygon points="777.1,18.5 781.5,20.9 777.1,23.3 772.7,20.9" fill="#fff" stroke="none" stroke-width="1" stroke-linejoin="round"/>
<polygon points="769.5,26.0 774.5,28.7 774.5,34.5 769.5,32.0" fill="#eef7fb" stroke="none" stroke-width="1" stroke-linejoin="round"/>
<polygon points="779.7,28.7 783.0,27.0 783.0,31.0 779.7,32.8" fill="#e4f1f8" stroke="none" stroke-width="1" stroke-linejoin="round"/>
<polygon points="831.9,16.8 840.5,21.7 831.9,26.6 823.3,21.7" fill="#a6d0e6" stroke="none" stroke-width="1" stroke-linejoin="round"/>
<polygon points="823.3,21.7 831.9,26.6 831.9,36.4 823.3,31.5" fill="#9fcde6" stroke="none" stroke-width="1" stroke-linejoin="round"/>
<polygon points="831.9,26.6 840.5,21.7 840.5,31.5 831.9,36.4" fill="#a6d0e6" stroke="none" stroke-width="1" stroke-linejoin="round"/>
<polygon points="831.9,16.8 840.5,21.7 840.5,31.5 831.9,36.4 823.3,31.5 823.3,21.7" fill="none" stroke="#0f80b6" stroke-width="1.6" stroke-linejoin="round"/>
<polyline points="823.3,21.7 831.9,26.6 840.5,21.7" fill="none" stroke="#0f80b6" stroke-width="1.6" stroke-linecap="round" stroke-linejoin="round"/>
<polyline points="831.9,26.6 831.9,36.4" fill="none" stroke="#0f80b6" stroke-width="1.6" stroke-linecap="round" stroke-linejoin="round"/>
<polyline points="823.3,21.7 831.9,36.4" fill="none" stroke="#0f80b6" stroke-width="0.8" stroke-linecap="round" stroke-linejoin="round"/>
<polyline points="831.9,26.6 823.3,31.5" fill="none" stroke="#0f80b6" stroke-width="0.8" stroke-linecap="round" stroke-linejoin="round"/>
<polyline points="831.9,26.6 840.5,31.5" fill="none" stroke="#0f80b6" stroke-width="0.8" stroke-linecap="round" stroke-linejoin="round"/>
<polyline points="840.5,21.7 831.9,36.4" fill="none" stroke="#0f80b6" stroke-width="0.8" stroke-linecap="round" stroke-linejoin="round"/>
<polyline points="823.3,21.7 840.5,21.7" fill="none" stroke="#0f80b6" stroke-width="0.8" stroke-linecap="round" stroke-linejoin="round"/>
<polyline points="831.9,16.8 831.9,26.6" fill="none" stroke="#0f80b6" stroke-width="0.8" stroke-linecap="round" stroke-linejoin="round"/>
<rect x="988.1" y="17.3" width="11.5" height="11.9" fill="#fff" stroke="#0f80b6" stroke-width="1.5"/>
<rect x="980.3" y="21.2" width="15.5" height="15.5" fill="#fff" stroke="#0f80b6" stroke-width="1.5"/>
<polygon points="1062.1,27.7 1075.2,21.1 1081.8,24.7 1081.8,32.8 1068.7,39.8 1062.1,36.3" fill="#e6e6e6" stroke="#b4b4b4" stroke-width="1" stroke-linejoin="round"/>
<polyline points="1062.1,27.7 1068.7,31.0 1081.8,24.7" fill="none" stroke="#b4b4b4" stroke-width="1" stroke-linecap="round" stroke-linejoin="round"/>
<polyline points="1068.7,31.0 1068.7,39.8" fill="none" stroke="#b4b4b4" stroke-width="1" stroke-linecap="round" stroke-linejoin="round"/>
<polygon points="1066.9,14.1 1073.6,17.9 1066.9,21.6 1060.2,17.9" fill="#c2deed" stroke="none" stroke-width="1" stroke-linejoin="round"/>
<polygon points="1060.2,17.9 1066.9,21.6 1066.9,29.1 1060.2,25.4" fill="#8ec6e2" stroke="none" stroke-width="1" stroke-linejoin="round"/>
<polygon points="1066.9,21.6 1073.6,17.9 1073.6,25.4 1066.9,29.1" fill="#9fcde6" stroke="none" stroke-width="1" stroke-linejoin="round"/>
<polygon points="1066.9,14.1 1073.6,17.9 1073.6,25.4 1066.9,29.1 1060.2,25.4 1060.2,17.9" fill="none" stroke="#0f80b6" stroke-width="1.6" stroke-linejoin="round"/>
<polyline points="1060.2,17.9 1066.9,21.6 1073.6,17.9" fill="none" stroke="#0f80b6" stroke-width="1.6" stroke-linecap="round" stroke-linejoin="round"/>
<polyline points="1066.9,21.6 1066.9,29.1" fill="none" stroke="#0f80b6" stroke-width="1.6" stroke-linecap="round" stroke-linejoin="round"/>
<rect x="1197.4" y="19.5" width="15.1" height="15" fill="#b9daeb"/>
<polyline points="1197.4,18.9 1197.4,35.1" fill="none" stroke="#0f80b6" stroke-width="1.5" stroke-linecap="round" stroke-linejoin="round"/>
<polyline points="1212.5,18.9 1212.5,35.1" fill="none" stroke="#0f80b6" stroke-width="1.5" stroke-linecap="round" stroke-linejoin="round"/>
<polyline points="1200.3,27.0 1209.7,27.0" fill="none" stroke="#0f80b6" stroke-width="1.3" stroke-linecap="round" stroke-linejoin="round"/>
<polyline points="1202.6,24.6 1200.0,27.0 1202.6,29.4" fill="none" stroke="#0f80b6" stroke-width="1.3" stroke-linecap="round" stroke-linejoin="round"/>
<polyline points="1207.4,24.6 1210.0,27.0 1207.4,29.4" fill="none" stroke="#0f80b6" stroke-width="1.3" stroke-linecap="round" stroke-linejoin="round"/>
<rect x="1273" y="17.3" width="11.6" height="11.7" fill="#fff" stroke="#0f80b6" stroke-width="1.5"/>
<rect x="1265.4" y="21.1" width="15.5" height="15.7" fill="none" stroke="#0f80b6" stroke-width="1.5"/>
<rect x="1273.7" y="21.9" width="6.5" height="6.4" fill="#b9daeb"/>
<g transform="translate(1366.1 35.8) scale(1)" fill="none" stroke="#5b4f55" stroke-width="1.25" stroke-linecap="round" stroke-linejoin="round"><path d="M-6.9 -5.7H6.9M-3 -5.7V-6.8Q-3 -7.7 -2 -7.7H2Q3 -7.7 3 -6.8V-5.7M-5.4 -4.6V6.2Q-5.4 7.7 -3.9 7.7H3.9Q5.4 7.7 5.4 6.2V-4.6M-2.5 -2.6V5.2M0 -2.6V5.2M2.5 -2.6V5.2"/></g>
<polyline points="1511.6,35.8 1516.5,40.4 1525.8,31.2" fill="none" stroke="#fff" stroke-width="1.6" stroke-linecap="round" stroke-linejoin="round"/>
<polyline points="409.2,105.2 419.4,114.8" fill="none" stroke="#666" stroke-width="1.2" stroke-linecap="round" stroke-linejoin="round"/>
<polyline points="419.4,105.2 409.2,114.8" fill="none" stroke="#666" stroke-width="1.2" stroke-linecap="round" stroke-linejoin="round"/>
<g transform="translate(40 362.1) scale(0.98)" fill="none" stroke="#5b4f55" stroke-width="1.28" stroke-linecap="round" stroke-linejoin="round"><path d="M-6.9 -5.7H6.9M-3 -5.7V-6.8Q-3 -7.7 -2 -7.7H2Q3 -7.7 3 -6.8V-5.7M-5.4 -4.6V6.2Q-5.4 7.7 -3.9 7.7H3.9Q5.4 7.7 5.4 6.2V-4.6M-2.5 -2.6V5.2M0 -2.6V5.2M2.5 -2.6V5.2"/></g>
<polyline points="403.8,206.2 410.6,212.8" fill="none" stroke="#555" stroke-width="1.3" stroke-linecap="round" stroke-linejoin="round"/>
<polyline points="410.6,206.2 403.8,212.8" fill="none" stroke="#555" stroke-width="1.3" stroke-linecap="round" stroke-linejoin="round"/>
<polyline points="403.8,236.2 410.6,242.8" fill="none" stroke="#555" stroke-width="1.3" stroke-linecap="round" stroke-linejoin="round"/>
<polyline points="410.6,236.2 403.8,242.8" fill="none" stroke="#555" stroke-width="1.3" stroke-linecap="round" stroke-linejoin="round"/>
<polyline points="403.8,266.2 410.6,272.8" fill="none" stroke="#555" stroke-width="1.3" stroke-linecap="round" stroke-linejoin="round"/>
<polyline points="410.6,266.2 403.8,272.8" fill="none" stroke="#555" stroke-width="1.3" stroke-linecap="round" stroke-linejoin="round"/>
<polyline points="403.8,296.2 410.6,302.8" fill="none" stroke="#555" stroke-width="1.3" stroke-linecap="round" stroke-linejoin="round"/>
<polyline points="410.6,296.2 403.8,302.8" fill="none" stroke="#555" stroke-width="1.3" stroke-linecap="round" stroke-linejoin="round"/>
<polyline points="0.3,201.0 0.3,220.5" fill="none" stroke="#d4d6d6" stroke-width="1.3" stroke-linecap="round" stroke-linejoin="round" stroke-linecap="butt"/>
<polyline points="4.0,201.0 4.0,220.5" fill="none" stroke="#d4d6d6" stroke-width="1.7" stroke-linecap="round" stroke-linejoin="round" stroke-linecap="butt"/>
<polyline points="1286.5,228.0 1286.5,247.0" fill="none" stroke="#dadada" stroke-width="1" stroke-linecap="round" stroke-linejoin="round"/>
<polyline points="1288.8,228.0 1288.8,247.0" fill="none" stroke="#dadada" stroke-width="1" stroke-linecap="round" stroke-linejoin="round"/>
<polyline points="1291.0,228.0 1291.0,247.0" fill="none" stroke="#dadada" stroke-width="1" stroke-linecap="round" stroke-linejoin="round"/>
<polyline points="1312.1,102.7 1317.5,108.4 1323.1,102.7" fill="none" stroke="#444" stroke-width="1.3" stroke-linecap="round" stroke-linejoin="round"/>
<polyline points="1318.4,129.2 1318.4,138.0" fill="none" stroke="#cfcfcf" stroke-width="1" stroke-linecap="round" stroke-linejoin="round"/>
<rect x="1311.7" y="138.3" width="12" height="13" fill="#fff" stroke="#dcdcdc" stroke-width="1"/>
<polyline points="1315.2,144.9 1319.8,144.9" fill="none" stroke="#333" stroke-width="2" stroke-linecap="round" stroke-linejoin="round" stroke-linecap="butt"/>
<line x1="1348.5" y1="164" x2="1348.5" y2="321" stroke="#cdcdcd" stroke-width="1" stroke-dasharray="1.5 1"/>
<polyline points="1349.0,180.5 1353.0,180.5" fill="none" stroke="#d2d2d2" stroke-width="1" stroke-linecap="round" stroke-linejoin="round"/>
<polygon points="1376.7,170.7 1385.4,175.8 1376.7,180.8 1368.0,175.8" fill="#ececec" stroke="none" stroke-width="1" stroke-linejoin="round"/>
<polygon points="1368.0,175.8 1376.7,180.8 1376.7,190.9 1368.0,185.9" fill="#9a9a9a" stroke="none" stroke-width="1" stroke-linejoin="round"/>
<polygon points="1376.7,180.8 1385.4,175.8 1385.4,185.9 1376.7,190.9" fill="#c6c6c6" stroke="none" stroke-width="1" stroke-linejoin="round"/>
<polyline points="1349.0,215.5 1353.0,215.5" fill="none" stroke="#d2d2d2" stroke-width="1" stroke-linecap="round" stroke-linejoin="round"/>
<polygon points="1376.7,205.7 1385.4,210.8 1376.7,215.8 1368.0,210.8" fill="#ececec" stroke="none" stroke-width="1" stroke-linejoin="round"/>
<polygon points="1368.0,210.8 1376.7,215.8 1376.7,225.9 1368.0,220.9" fill="#9a9a9a" stroke="none" stroke-width="1" stroke-linejoin="round"/>
<polygon points="1376.7,215.8 1385.4,210.8 1385.4,220.9 1376.7,225.9" fill="#c6c6c6" stroke="none" stroke-width="1" stroke-linejoin="round"/>
<polyline points="1349.0,250.5 1353.0,250.5" fill="none" stroke="#d2d2d2" stroke-width="1" stroke-linecap="round" stroke-linejoin="round"/>
<polygon points="1376.7,240.7 1385.4,245.8 1376.7,250.8 1368.0,245.8" fill="#ececec" stroke="none" stroke-width="1" stroke-linejoin="round"/>
<polygon points="1368.0,245.8 1376.7,250.8 1376.7,260.9 1368.0,255.9" fill="#9a9a9a" stroke="none" stroke-width="1" stroke-linejoin="round"/>
<polygon points="1376.7,250.8 1385.4,245.8 1385.4,255.9 1376.7,260.9" fill="#c6c6c6" stroke="none" stroke-width="1" stroke-linejoin="round"/>
<polyline points="1349.0,285.5 1353.0,285.5" fill="none" stroke="#d2d2d2" stroke-width="1" stroke-linecap="round" stroke-linejoin="round"/>
<polygon points="1376.7,275.7 1385.4,280.8 1376.7,285.8 1368.0,280.8" fill="#ececec" stroke="none" stroke-width="1" stroke-linejoin="round"/>
<polygon points="1368.0,280.8 1376.7,285.8 1376.7,295.9 1368.0,290.9" fill="#9a9a9a" stroke="none" stroke-width="1" stroke-linejoin="round"/>
<polygon points="1376.7,285.8 1385.4,280.8 1385.4,290.9 1376.7,295.9" fill="#c6c6c6" stroke="none" stroke-width="1" stroke-linejoin="round"/>
<polyline points="1349.0,320.5 1353.0,320.5" fill="none" stroke="#d2d2d2" stroke-width="1" stroke-linecap="round" stroke-linejoin="round"/>
<polygon points="1376.7,310.7 1385.4,315.8 1376.7,320.8 1368.0,315.8" fill="#ececec" stroke="none" stroke-width="1" stroke-linejoin="round"/>
<polygon points="1368.0,315.8 1376.7,320.8 1376.7,330.9 1368.0,325.9" fill="#9a9a9a" stroke="none" stroke-width="1" stroke-linejoin="round"/>
<polygon points="1376.7,320.8 1385.4,315.8 1385.4,325.9 1376.7,330.9" fill="#c6c6c6" stroke="none" stroke-width="1" stroke-linejoin="round"/>
<rect x="1545" y="366" width="28" height="10" rx="5" fill="#e9e9e9"/>
<circle cx="1552.7" cy="371.6" r="9.6" fill="rgba(0,0,0,0.10)"/>
<circle cx="1552.7" cy="371.0" r="9.3" fill="#fff" stroke="#d2d2d2" stroke-width="1"/>
<polyline points="629.5,88.0 629.5,135.0" fill="none" stroke="#ededed" stroke-width="1" stroke-linecap="round" stroke-linejoin="round"/>
<polyline points="955.5,88.0 955.5,135.0" fill="none" stroke="#ededed" stroke-width="1" stroke-linecap="round" stroke-linejoin="round"/>
<polyline points="1005.5,88.0 1005.5,135.0" fill="none" stroke="#ededed" stroke-width="1" stroke-linecap="round" stroke-linejoin="round"/>
<polyline points="1060.5,88.0 1060.5,135.0" fill="none" stroke="#ededed" stroke-width="1" stroke-linecap="round" stroke-linejoin="round"/>
<polygon points="653.4,101.5 661.7,106.3 653.4,111.1 645.1,106.3" fill="#e9e9e9" stroke="none" stroke-width="1" stroke-linejoin="round"/>
<polygon points="645.1,106.3 653.4,111.1 653.4,120.7 645.1,115.9" fill="#989898" stroke="none" stroke-width="1" stroke-linejoin="round"/>
<polygon points="653.4,111.1 661.7,106.3 661.7,115.9 653.4,120.7" fill="#cdcdcd" stroke="none" stroke-width="1" stroke-linejoin="round"/>
<polygon points="653.4,101.5 661.7,106.3 661.7,115.9 653.4,120.7 645.1,115.9 645.1,106.3" fill="none" stroke="#5b4f55" stroke-width="1.1" stroke-linejoin="round"/>
<polyline points="645.1,106.3 653.4,111.1 661.7,106.3" fill="none" stroke="#5b4f55" stroke-width="1.1" stroke-linecap="round" stroke-linejoin="round"/>
<polyline points="653.4,111.1 653.4,120.7" fill="none" stroke="#5b4f55" stroke-width="1.1" stroke-linecap="round" stroke-linejoin="round"/>
<polyline points="666.2,127.5 670.6,127.5 670.6,123.2" fill="none" stroke="#a8a8a8" stroke-width="1.2" stroke-linecap="round" stroke-linejoin="round"/>
<polygon points="708.6,102.0 716.5,106.5 708.6,111.1 700.7,106.5" fill="#a8d8f5" stroke="none" stroke-width="1" stroke-linejoin="round"/>
<polygon points="700.7,106.5 708.6,111.1 708.6,120.2 700.7,115.6" fill="#1da8de" stroke="none" stroke-width="1" stroke-linejoin="round"/>
<polygon points="708.6,111.1 716.5,106.5 716.5,115.6 708.6,120.2" fill="#6cc0e8" stroke="none" stroke-width="1" stroke-linejoin="round"/>
<polygon points="708.6,102.0 716.5,106.5 716.5,115.6 708.6,120.2 700.7,115.6 700.7,106.5" fill="none" stroke="#222" stroke-width="1.3" stroke-linejoin="round"/>
<polyline points="700.7,106.5 708.6,111.1 716.5,106.5" fill="none" stroke="#222" stroke-width="1.3" stroke-linecap="round" stroke-linejoin="round"/>
<polyline points="708.6,111.1 708.6,120.2" fill="none" stroke="#222" stroke-width="1.3" stroke-linecap="round" stroke-linejoin="round"/>
<circle cx="708.6" cy="102.0" r="1.8" fill="#222" stroke="none" stroke-width="1"/>
<circle cx="700.7" cy="106.5" r="1.8" fill="#222" stroke="none" stroke-width="1"/>
<circle cx="716.5" cy="106.5" r="1.8" fill="#222" stroke="none" stroke-width="1"/>
<circle cx="708.6" cy="111.1" r="1.8" fill="#222" stroke="none" stroke-width="1"/>
<circle cx="700.7" cy="115.6" r="1.8" fill="#222" stroke="none" stroke-width="1"/>
<circle cx="716.5" cy="115.6" r="1.8" fill="#222" stroke="none" stroke-width="1"/>
<circle cx="708.6" cy="120.2" r="1.8" fill="#222" stroke="none" stroke-width="1"/>
<polygon points="762.6,102.1 770.5,106.6 762.6,111.1 754.8,106.6" fill="#fbfbfb" stroke="none" stroke-width="1" stroke-linejoin="round"/>
<polygon points="754.8,106.6 762.6,111.1 762.6,120.1 754.8,115.6" fill="#a8d6f5" stroke="none" stroke-width="1" stroke-linejoin="round"/>
<polygon points="762.6,111.1 770.5,106.6 770.5,115.6 762.6,120.1" fill="#fbfbfb" stroke="none" stroke-width="1" stroke-linejoin="round"/>
<polygon points="762.6,102.1 770.5,106.6 770.5,115.6 762.6,120.1 754.8,115.6 754.8,106.6" fill="none" stroke="#9a9a9a" stroke-width="1.1" stroke-linejoin="round"/>
<polyline points="754.8,106.6 762.6,111.1 770.5,106.6" fill="none" stroke="#9a9a9a" stroke-width="1.1" stroke-linecap="round" stroke-linejoin="round"/>
<polyline points="762.6,111.1 762.6,120.1" fill="none" stroke="#9a9a9a" stroke-width="1.1" stroke-linecap="round" stroke-linejoin="round"/>
<circle cx="762.6" cy="102.1" r="1.7" fill="#999" stroke="none" stroke-width="1"/>
<circle cx="754.8" cy="106.6" r="1.7" fill="#999" stroke="none" stroke-width="1"/>
<circle cx="770.5" cy="106.6" r="1.7" fill="#999" stroke="none" stroke-width="1"/>
<circle cx="762.6" cy="111.1" r="1.7" fill="#999" stroke="none" stroke-width="1"/>
<circle cx="754.8" cy="115.6" r="1.7" fill="#999" stroke="none" stroke-width="1"/>
<circle cx="770.5" cy="115.6" r="1.7" fill="#999" stroke="none" stroke-width="1"/>
<circle cx="762.6" cy="120.1" r="1.7" fill="#999" stroke="none" stroke-width="1"/>
<polygon points="816.8,102.3 824.4,106.7 816.8,111.1 809.2,106.7" fill="none" stroke="none" stroke-width="1" stroke-linejoin="round"/>
<polygon points="809.2,106.7 816.8,111.1 816.8,119.9 809.2,115.5" fill="none" stroke="none" stroke-width="1" stroke-linejoin="round"/>
<polygon points="816.8,111.1 824.4,106.7 824.4,115.5 816.8,119.9" fill="none" stroke="none" stroke-width="1" stroke-linejoin="round"/>
<polygon points="816.8,102.3 824.4,106.7 824.4,115.5 816.8,119.9 809.2,115.5 809.2,106.7" fill="none" stroke="#a8d6f5" stroke-width="1.1" stroke-linejoin="round"/>
<polyline points="809.2,106.7 816.8,111.1 824.4,106.7" fill="none" stroke="#a8d6f5" stroke-width="1.1" stroke-linecap="round" stroke-linejoin="round"/>
<polyline points="816.8,111.1 816.8,119.9" fill="none" stroke="#a8d6f5" stroke-width="1.1" stroke-linecap="round" stroke-linejoin="round"/>
<circle cx="816.8" cy="102.3" r="1.9" fill="#888" stroke="none" stroke-width="1"/>
<circle cx="809.2" cy="106.7" r="1.9" fill="#888" stroke="none" stroke-width="1"/>
<circle cx="824.4" cy="106.7" r="1.9" fill="#888" stroke="none" stroke-width="1"/>
<circle cx="816.8" cy="111.1" r="1.9" fill="#888" stroke="none" stroke-width="1"/>
<circle cx="809.2" cy="115.5" r="1.9" fill="#888" stroke="none" stroke-width="1"/>
<circle cx="824.4" cy="115.5" r="1.9" fill="#888" stroke="none" stroke-width="1"/>
<circle cx="816.8" cy="119.9" r="1.9" fill="#888" stroke="none" stroke-width="1"/>
<polygon points="869.6,102.3 877.3,106.7 869.6,111.1 861.9,106.7" fill="none" stroke="none" stroke-width="1" stroke-linejoin="round"/>
<polygon points="861.9,106.7 869.6,111.1 869.6,119.9 861.9,115.5" fill="none" stroke="none" stroke-width="1" stroke-linejoin="round"/>
<polygon points="869.6,111.1 877.3,106.7 877.3,115.5 869.6,119.9" fill="none" stroke="none" stroke-width="1" stroke-linejoin="round"/>
<polygon points="869.6,102.3 877.3,106.7 877.3,115.5 869.6,119.9 861.9,115.5 861.9,106.7" fill="none" stroke="#777" stroke-width="1.2" stroke-linejoin="round"/>
<polyline points="861.9,106.7 869.6,111.1 877.3,106.7" fill="none" stroke="#777" stroke-width="1.2" stroke-linecap="round" stroke-linejoin="round"/>
<polyline points="869.6,111.1 869.6,119.9" fill="none" stroke="#777" stroke-width="1.2" stroke-linecap="round" stroke-linejoin="round"/>
<circle cx="869.6" cy="102.3" r="1.9" fill="#a8d8fa" stroke="none" stroke-width="1"/>
<circle cx="861.9" cy="106.7" r="1.9" fill="#a8d8fa" stroke="none" stroke-width="1"/>
<circle cx="877.3" cy="106.7" r="1.9" fill="#a8d8fa" stroke="none" stroke-width="1"/>
<circle cx="869.6" cy="111.1" r="1.9" fill="#a8d8fa" stroke="none" stroke-width="1"/>
<circle cx="861.9" cy="115.5" r="1.9" fill="#a8d8fa" stroke="none" stroke-width="1"/>
<circle cx="877.3" cy="115.5" r="1.9" fill="#a8d8fa" stroke="none" stroke-width="1"/>
<circle cx="869.6" cy="119.9" r="1.9" fill="#a8d8fa" stroke="none" stroke-width="1"/>
<circle cx="925.4" cy="104.7" r="5.5" fill="#333" stroke="none" stroke-width="1"/>
<polyline points="925.4,110.0 925.4,120.5" fill="none" stroke="#333" stroke-width="1.3" stroke-linecap="round" stroke-linejoin="round"/>
<circle cx="925.4" cy="120.9" r="1.8" fill="#333" stroke="none" stroke-width="1"/>
<rect x="971.2" y="103.3" width="15.6" height="11.8" fill="none" stroke="#333" stroke-width="1.6" stroke-dasharray="3.2 2.2"/>
<polygon points="983.2,111.6 983.2,120.6 985.4,118.6 987.2,122.0 988.6,121.3 986.9,118.0 989.8,117.6" fill="#222" stroke="#f5f5f5" stroke-width="0.5" stroke-linejoin="round"/>
<polygon points="1029.8,101.7 1037.9,106.0 1037.9,116.1 1033.4,118.9 1025.3,114.3 1025.3,104.2" fill="none" stroke="#b8b8b8" stroke-width="0.9" stroke-linejoin="round"/>
<polyline points="1025.3,104.2 1033.4,108.3 1037.9,106.0" fill="none" stroke="#b8b8b8" stroke-width="0.9" stroke-linecap="round" stroke-linejoin="round"/>
<polyline points="1033.4,108.3 1033.4,118.9" fill="none" stroke="#b8b8b8" stroke-width="0.9" stroke-linecap="round" stroke-linejoin="round"/>
<polyline points="1029.8,101.7 1029.8,111.5 1025.3,114.3" fill="none" stroke="#d0d0d0" stroke-width="0.8" stroke-linecap="round" stroke-linejoin="round"/>
<polyline points="1029.8,111.5 1037.9,116.1" fill="none" stroke="#d0d0d0" stroke-width="0.8" stroke-linecap="round" stroke-linejoin="round"/>
<polyline points="1025.3,104.2 1033.4,118.9" fill="none" stroke="#d5d5d5" stroke-width="0.7" stroke-linecap="round" stroke-linejoin="round"/>
<polyline points="1025.3,114.3 1033.4,108.3" fill="none" stroke="#d5d5d5" stroke-width="0.7" stroke-linecap="round" stroke-linejoin="round"/>
<polyline points="1033.4,108.3 1037.9,116.1" fill="none" stroke="#d5d5d5" stroke-width="0.7" stroke-linecap="round" stroke-linejoin="round"/>
<circle cx="1029.8" cy="101.7" r="1.3" fill="#f5f5f5" stroke="#b8b8b8" stroke-width="0.8"/>
<circle cx="1037.9" cy="106.0" r="1.3" fill="#f5f5f5" stroke="#b8b8b8" stroke-width="0.8"/>
<circle cx="1037.9" cy="116.1" r="1.3" fill="#f5f5f5" stroke="#b8b8b8" stroke-width="0.8"/>
<circle cx="1033.4" cy="118.9" r="1.3" fill="#f5f5f5" stroke="#b8b8b8" stroke-width="0.8"/>
<circle cx="1025.3" cy="114.3" r="1.3" fill="#f5f5f5" stroke="#b8b8b8" stroke-width="0.8"/>
<circle cx="1025.3" cy="104.2" r="1.3" fill="#f5f5f5" stroke="#b8b8b8" stroke-width="0.8"/>
<circle cx="1033.4" cy="108.3" r="1.3" fill="#f5f5f5" stroke="#b8b8b8" stroke-width="0.8"/>
<path d="M1082.4 111.3V106.5Q1082.6 101.3 1088.2 100.3L1090 100.1L1095.5 102.7V110.8L1086.4 115.3L1082.4 113.3ZM1086.4 115.3V108Q1086.6 103.6 1091.5 102.8L1095.5 102.7M1082.6 105.5Q1084 107.8 1086.4 108M1082.4 113.6L1074.8 118.2L1079.4 120.6L1086.4 116.5M1077.2 116.8L1081.7 119.2M1079.6 115.3L1084 117.8" fill="none" stroke="#4a3c48" stroke-width="1.1" stroke-linejoin="round"/>
<path d="M1534.7 632.1H1553.3Q1556.8 632.1 1556.8 635.6V661.9L1550.5 658.7H1534.7Q1531.2 658.7 1531.2 655.2V635.6Q1531.2 632.1 1534.7 632.1Z" fill="#fff"/>
<path d="M1535 650.6Q1544 656.6 1553 650.6" fill="none" stroke="#0077a8" stroke-width="1.6" stroke-linecap="round"/>
</svg>
<svg class="i" style="left:0;top:0" width="1583" height="865" viewBox="0 0 1583 865">
<polygon points="1478.2,724.4 1525.7,751.7 1527.8,817.0 1468.1,840.7 1422.2,813.4 1420.2,748.7" fill="#fafafa" fill-opacity=".85"/>
<line x1="1478.2" y1="724.4" x2="1480.2" y2="789.1" stroke="#cfcfcf" stroke-width="1" stroke-dasharray="3 2.5"/>
<line x1="1480.2" y1="789.1" x2="1422.2" y2="813.4" stroke="#cfcfcf" stroke-width="1" stroke-dasharray="3 2.5"/>
<line x1="1480.2" y1="789.1" x2="1527.8" y2="817" stroke="#cfcfcf" stroke-width="1" stroke-dasharray="3 2.5"/>
<line x1="1468.1" y1="848.8" x2="1399.5" y2="809" stroke="#62e362" stroke-width="1.4"/>
<polygon points="1396.3,807.3 1403.8,808.2 1401.3,812.6" fill="#62e362"/>
<line x1="1468.1" y1="848.8" x2="1555.5" y2="812.9" stroke="#ff6a4d" stroke-width="1.4"/>
<line x1="1468.1" y1="848.8" x2="1555.5" y2="812.9" stroke="#ffc94d" stroke-width="1.4" stroke-dasharray="1 2.5" opacity=".6"/>
<polygon points="1559.3,811.3 1552.4,816.1 1550.6,811.6" fill="#ff6a4d"/>
<line x1="1478.2" y1="724.4" x2="1420.2" y2="748.7" stroke="#9a9a9a" stroke-width="1.2" stroke-linecap="round"/>
<line x1="1478.2" y1="724.4" x2="1525.7" y2="751.7" stroke="#9a9a9a" stroke-width="1.2" stroke-linecap="round"/>
<line x1="1420.2" y1="748.7" x2="1466.1" y2="776" stroke="#9a9a9a" stroke-width="1.2" stroke-linecap="round"/>
<line x1="1525.7" y1="751.7" x2="1466.1" y2="776" stroke="#9a9a9a" stroke-width="1.2" stroke-linecap="round"/>
<line x1="1420.2" y1="748.7" x2="1422.2" y2="813.4" stroke="#9a9a9a" stroke-width="1.2" stroke-linecap="round"/>
<line x1="1525.7" y1="751.7" x2="1527.8" y2="817" stroke="#9a9a9a" stroke-width="1.2" stroke-linecap="round"/>
<line x1="1422.2" y1="813.4" x2="1468.1" y2="840.7" stroke="#9a9a9a" stroke-width="1.2" stroke-linecap="round"/>
<line x1="1527.8" y1="817" x2="1468.1" y2="840.7" stroke="#9a9a9a" stroke-width="1.2" stroke-linecap="round"/>
<line x1="1466.1" y1="776" x2="1468.1" y2="840.7" stroke="#9a9a9a" stroke-width="1.2" stroke-linecap="round"/>
<line x1="1468.1" y1="848.8" x2="1468" y2="841" stroke="#2a62e0" stroke-width="1.6"/>
<line x1="1468" y1="841" x2="1465.6" y2="757" stroke="#5aa8ec" stroke-width="1.5"/>
<polygon points="1465.4,750.3 1467.6,760.5 1463.6,760.6" fill="#2f6fe0"/>
<text x="1465.5" y="741.5" font-family='"Liberation Sans",sans-serif' font-size="16" fill="#3b82f0" text-anchor="middle">Z</text>
<text x="1388.3" y="803.5" font-family='"Liberation Sans",sans-serif' font-size="19" fill="#5fdc5f" text-anchor="middle">y</text>
<text x="1568.8" y="811.3" font-family='"Liberation Sans",sans-serif' font-size="15.5" fill="#f55f52" text-anchor="middle">X</text>
<text transform="matrix(-0.031 -1 0.709 0.422 1447.6 796.6)" font-family='"Liberation Sans",sans-serif' font-size="10" fill="#8a8a8a" text-anchor="middle">FRONT</text>
<text transform="matrix(0.921 -0.376 0.031 1 1497.2 800.3)" font-family='"Liberation Sans",sans-serif' font-size="9.7" fill="#8a8a8a" text-anchor="middle">RIGHT</text>
<text transform="matrix(0.896 -0.376 0.42 0.6 1474.6 752.8)" font-family='"Liberation Sans",sans-serif' font-size="7.6" fill="#8a8a8a" text-anchor="middle">TOP</text>
<polyline points="1470.6,692 1476.4,686.3 1482.2,692" stroke="#444" stroke-width="1.3" fill="none" stroke-linecap="round" stroke-linejoin="round"/>
<polyline points="1384.6,777.4 1379.8,783 1384.6,788.7" stroke="#444" stroke-width="1.3" fill="none" stroke-linecap="round" stroke-linejoin="round"/>
<polyline points="1568.2,777.4 1573.2,783 1568.2,788.7" stroke="#444" stroke-width="1.3" fill="none" stroke-linecap="round" stroke-linejoin="round"/>
<path d="M1531.6 722L1537.6 716.2L1543.6 722M1533.3 721V727.8H1535.9V723.6H1539.3V727.8H1541.9V721" stroke="#555" stroke-width="1" fill="none" stroke-linecap="round" stroke-linejoin="round"/>
<path d="M1411.9 840.1A7.7 7.7 0 1 1 1404.1 849.8" stroke="#555" stroke-width="1" fill="none" stroke-linecap="round" stroke-linejoin="round"/>
<polygon points="1403.3,844.6 1406.6,849.4 1401.6,849.6" fill="#444"/>
<path d="M1538 840.1A7.7 7.7 0 1 0 1545.8 849.8" stroke="#555" stroke-width="1" fill="none" stroke-linecap="round" stroke-linejoin="round"/>
<polygon points="1546.6,844.6 1543.3,849.4 1548.3,849.6" fill="#444"/>
</svg>
<span class="t" style="left:1.3px;top:44.7px;font-size:11px;line-height:11px;letter-spacing:0.2px;color:#3a3a3a">Delete</span>
<span class="t" style="left:58.7px;top:44.7px;font-size:11px;line-height:11px;letter-spacing:0.333px;color:#3a3a3a">Move</span>
<span class="t" style="left:108.3px;top:44.7px;font-size:11px;line-height:11px;letter-spacing:0.333px;color:#3a3a3a">Extrude</span>
<span class="t" style="left:184.1px;top:27.4px;font-size:13.5px;line-height:13.5px;letter-spacing:-0.634px;color:#555">BODY</span>
<span class="t" style="left:237.3px;top:44.7px;font-size:11px;line-height:11px;letter-spacing:0.2px;color:#3a3a3a">Delete</span>
<span class="t" style="left:289.3px;top:44.7px;font-size:11px;line-height:11px;letter-spacing:-0.1px;color:#3a3a3a">Close sheet</span>
<span class="t" style="left:363.3px;top:44.7px;font-size:11px;line-height:11px;letter-spacing:0.1px;color:#3a3a3a">Facet split</span>
<span class="t" style="left:432.1px;top:44.7px;font-size:11px;line-height:11px;letter-spacing:0.616px;color:#3a3a3a">Imprint</span>
<span class="t" style="left:492.3px;top:44.7px;font-size:11px;line-height:11px;letter-spacing:-0.25px;color:#3a3a3a">Scale</span>
<span class="t" style="left:548.8px;top:44.7px;font-size:11px;line-height:11px;letter-spacing:0.375px;color:#3a3a3a">Split</span>
<span class="t" style="left:598.8px;top:44.7px;font-size:11px;line-height:11px;letter-spacing:0.083px;color:#3a3a3a">Boolean</span>
<span class="t" style="left:675.0px;top:44.7px;font-size:11px;line-height:11px;letter-spacing:-0.014px;color:#3a3a3a">Transform</span>
<span class="t" style="left:756.1px;top:44.7px;font-size:11px;line-height:11px;letter-spacing:0.087px;color:#3a3a3a">Simplify</span>
<span class="t" style="left:819.3px;top:44.7px;font-size:11px;line-height:11px;letter-spacing:0.333px;color:#3a3a3a">Wrap</span>
<span class="t" style="left:887.3px;top:27.4px;font-size:13.5px;line-height:13.5px;letter-spacing:-0.75px;color:#555">MODEL</span>
<span class="t" style="left:947.8px;top:44.7px;font-size:11px;line-height:11px;letter-spacing:0.143px;color:#3a3a3a">Fix interferences</span>
<span class="t" style="left:1049.0px;top:44.7px;font-size:11px;line-height:11px;letter-spacing:-0.167px;color:#3a3a3a">Add CAD</span>
<span class="t" style="left:1131.1px;top:27.4px;font-size:13.5px;line-height:13.5px;letter-spacing:-1.6px;color:#555">TOOLS</span>
<span class="t" style="left:1193.3px;top:44.7px;font-size:11px;line-height:11px;letter-spacing:-0.667px;color:#3a3a3a">Gaps</span>
<span class="t" style="left:1240.9px;top:44.7px;font-size:11px;line-height:11px;letter-spacing:0.183px;color:#3a3a3a">Interferences</span>
<span class="t" style="left:1383.8px;top:28.2px;font-size:15px;line-height:15px;letter-spacing:0.683px;color:#3a3a3a">Delete draft</span>
<span class="t" style="left:1535.5px;top:28.2px;font-size:15px;line-height:15px;letter-spacing:0.133px;color:#fff">Save</span>
<span class="t" style="left:22.5px;top:100.9px;font-size:19px;line-height:19px;font-weight:700;letter-spacing:-0.642px;color:#2e2e2e">Delete bodies</span>
<span class="t" style="left:22.5px;top:162.0px;font-size:15px;line-height:15px;font-weight:700;letter-spacing:0.068px;color:#333">Bodies to be deleted</span>
<span class="t" style="left:373.9px;top:160.6px;font-size:14px;line-height:14px;letter-spacing:-0.012px;color:#1b7fb0">Clear list</span>
<span class="t" style="left:35.3px;top:202.9px;font-size:15px;line-height:15px;letter-spacing:0.4px;color:#3a3a3a">Valve Body</span>
<span class="t" style="left:35.3px;top:232.9px;font-size:15px;line-height:15px;letter-spacing:0.222px;color:#3a3a3a">Valve Seat</span>
<span class="t" style="left:35.3px;top:262.9px;font-size:15px;line-height:15px;letter-spacing:0.475px;color:#3a3a3a">Valve</span>
<span class="t" style="left:34.3px;top:292.9px;font-size:15px;line-height:15px;letter-spacing:0.725px;color:#3a3a3a">Cover</span>
<span class="t" style="left:355.7px;top:355.1px;font-size:15px;line-height:15px;font-weight:700;letter-spacing:-0.35px;color:#fff">Apply</span>
<span class="t" style="left:1334.3px;top:97.8px;font-size:15.5px;line-height:15.5px;-webkit-text-stroke:0.35px #2e2e2e;letter-spacing:0.258px;color:#2e2e2e">GEOMETRY</span>
<span class="t" style="left:1334.3px;top:138.0px;font-size:15px;line-height:15px;font-weight:700;letter-spacing:0.148px;color:#333">Full model - Non-return val…</span>
<span class="t" style="left:1394.7px;top:172.7px;font-size:15px;line-height:15px;letter-spacing:0.75px;color:#2ba7df">Cover</span>
<span class="t" style="left:1395.7px;top:207.9px;font-size:15px;line-height:15px;letter-spacing:0.475px;color:#2ba7df">Valve</span>
<span class="t" style="left:1395.3px;top:242.9px;font-size:15px;line-height:15px;letter-spacing:0.177px;color:#2ba7df">Valve Seat</span>
<span class="t" style="left:1395.3px;top:277.8px;font-size:15px;line-height:15px;letter-spacing:0.456px;color:#2ba7df">Valve Body</span>
<span class="t" style="left:1394.3px;top:313.0px;font-size:15px;line-height:15px;letter-spacing:0.68px;color:#3a3a3a">Flow region</span>
<span class="t" style="left:1309.3px;top:363.8px;font-size:15px;line-height:15px;letter-spacing:0.312px;color:#3a3a3a">Show faces</span>

<div class="abs badge" style="left:230px;top:77.5px">1</div>
<div class="abs badge" style="left:1484px;top:204px">2</div>
<div class="abs badge" style="left:276.1px;top:339.7px">3</div>
</body>
</html>
